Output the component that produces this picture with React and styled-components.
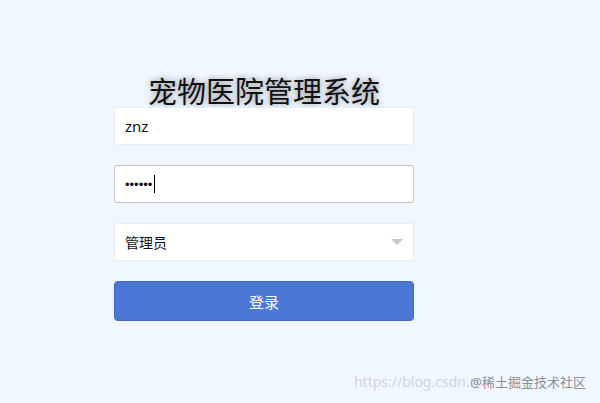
import React from 'react';
import styled, { createGlobalStyle } from 'styled-components';

const GlobalStyle = createGlobalStyle`
  html, body {
    margin: 0;
    padding: 0;
    background: #f0f7fe;
  }
  body {
    font-family: 'Noto Sans', 'Noto Sans CJK SC', sans-serif;
  }
`;

const App = () => {
  return (
    <Page>
      <GlobalStyle />
      <LoginBox>
        <Title>宠物医院管理系统</Title>
        <Field defaultValue="znz" />
        <FieldWrap>
          <Field type="password" defaultValue="123456" focused />
          <Caret />
        </FieldWrap>
        <SelectBox>
          <span>管理员</span>
          <Arrow />
        </SelectBox>
        <LoginButton>登录</LoginButton>
      </LoginBox>
      <Watermark>
        <span className="url">https://blog.csdn.n</span>
        <span className="brand">@稀土掘金技术社区</span>
      </Watermark>
    </Page>
  );
};

export default App;

const Page = styled.main`
  position: relative;
  width: 600px;
  height: 403px;
  overflow: hidden;
  background: #f0f7fe;
  box-sizing: border-box;
  padding: 72px 0 0 114px;
`;

const LoginBox = styled.section`
  width: 300px;
  display: flex;
  flex-direction: column;
  align-items: stretch;
`;

const Title = styled.h1`
  margin: 0 0 -1px;
  text-align: center;
  font-family: 'Noto Sans CJK SC', sans-serif;
  font-size: 29px;
  font-weight: 400;
  line-height: 36px;
  color: #111;
  text-shadow: 0 0 6px rgba(0, 0, 0, 0.45);
`;

const FieldWrap = styled.div`
  position: relative;
`;

const Field = styled.input`
  box-sizing: border-box;
  height: 38px;
  width: 100%;
  margin-bottom: 20px;
  padding: 0 10px;
  border: 1px solid ${(p) => (p.focused ? '#c4c8ce' : '#e9edf2')};
  border-radius: 2px;
  background: #fff;
  font-family: ${(p) => (p.type === 'password' ? "'Liberation Sans'" : "'Noto Sans'")}, 'Noto Sans CJK SC', sans-serif;
  font-size: ${(p) => (p.type === 'password' ? '13px' : '15px')};
  color: #111;
  outline: none;
`;

const Caret = styled.span`
  position: absolute;
  left: 40px;
  top: 10px;
  width: 1px;
  height: 18px;
  background: #000;
`;

const SelectBox = styled.div`
  box-sizing: border-box;
  height: 38px;
  margin-bottom: 20px;
  padding: 0 10px;
  display: flex;
  align-items: center;
  justify-content: space-between;
  border: 1px solid #e9edf2;
  border-radius: 2px;
  background: #fff;
  font-family: 'Noto Sans CJK SC', sans-serif;
  font-size: 14px;
  color: #111;
`;

const Arrow = styled.i`
  width: 0;
  height: 0;
  border-left: 6px solid transparent;
  border-right: 6px solid transparent;
  border-top: 6px solid #c6c8cc;
`;

const LoginButton = styled.button`
  height: 40px;
  border: 1px solid #3f6cc8;
  border-radius: 4px;
  background: #4a78d4;
  color: #fff;
  font-family: 'Noto Sans CJK SC', sans-serif;
  font-size: 15px;
  cursor: pointer;
`;

const Watermark = styled.div`
  position: absolute;
  right: 14px;
  bottom: 12px;
  display: flex;
  align-items: center;
  font-family: 'Noto Sans', 'Noto Sans CJK SC', sans-serif;
  font-size: 14px;
  color: rgba(180, 188, 198, 0.6);
  .url {
    margin-right: -8px;
  }
  .brand {
    color: #8a9099;
    font-size: 13px;
  }
`;
